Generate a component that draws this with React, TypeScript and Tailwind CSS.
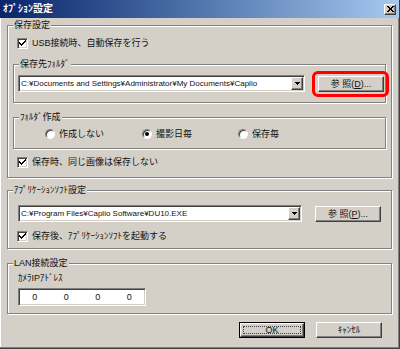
import React from "react";

const sunken =
  "border border-t-[#808080] border-l-[#808080] border-b-white border-r-white shadow-[inset_1px_1px_0_#404040,inset_-1px_-1px_0_#d4d0c8]";
const raised =
  "border border-t-white border-l-white border-b-[#404040] border-r-[#404040] shadow-[inset_-1px_-1px_0_#808080]";

function Group({
  label,
  className,
  children,
}: {
  label: string;
  className: string;
  children?: React.ReactNode;
}) {
  return (
    <div
      className={
        "relative border border-[#808080] shadow-[1px_1px_0_#fff,inset_1px_1px_0_#fff] " +
        className
      }
    >
      <span className="absolute left-[5px] top-[-7px] px-[1px] bg-[#d4d0c8] leading-[12px] whitespace-nowrap">
        {label}
      </span>
      {children}
    </div>
  );
}

function Check() {
  return (
    <span
      className={
        "w-[11px] h-[11px] bg-white flex items-center justify-center shrink-0 " +
        sunken
      }
    >
      <svg width="7" height="7" viewBox="0 0 7 7" shapeRendering="crispEdges">
        <path
          d="M6 0h1v2h-1v1h-1v1h-1v1h-1v1h-1v-1h-1v-1h-1v-2h1v1h1v1h1v-1h1v-1h1z"
          fill="#000"
        />
      </svg>
    </span>
  );
}

function CheckRow({ label, className }: { label: string; className: string }) {
  return (
    <div className={"flex items-center h-[12px] gap-[4px] " + className}>
      <Check />
      <span className="leading-[12px] whitespace-nowrap">{label}</span>
    </div>
  );
}

function Radio({ on, label }: { on?: boolean; label: string }) {
  return (
    <div className="flex items-center gap-[4px] h-[12px]">
      <span className="w-[10px] h-[10px] rounded-full bg-white border border-t-[#808080] border-l-[#808080] border-b-white border-r-white shadow-[inset_1px_1px_0_#404040] flex items-center justify-center shrink-0">
        {on && <span className="w-[4px] h-[4px] rounded-full bg-black" />}
      </span>
      <span className="leading-[12px] whitespace-nowrap">{label}</span>
    </div>
  );
}

function Combo({ text }: { text: string }) {
  return (
    <div className={"w-[287px] h-[17px] bg-white flex items-center " + sunken}>
      <span className="flex-1 pl-[2px] text-[8px] leading-[12px] whitespace-nowrap overflow-hidden">
        {text}
      </span>
      <span
        className={
          "w-[12px] h-[13px] mr-[1px] bg-[#d4d0c8] flex items-center justify-center shrink-0 " +
          raised
        }
      >
        <svg width="5" height="3" viewBox="0 0 5 3" shapeRendering="crispEdges">
          <path d="M0 0h5v1h-1v1h-1v1h-1v-1h-1v-1h-1z" fill="#000" />
        </svg>
      </span>
    </div>
  );
}

function Button({
  children,
  isDefault,
}: {
  children: React.ReactNode;
  isDefault?: boolean;
}) {
  if (isDefault) {
    return (
      <div className="w-[66px] h-[16px] border border-black flex">
        <div
          className={
            "flex-1 bg-[#d4d0c8] flex items-center justify-center p-[2px] " +
            raised
          }
        >
          <div className="w-full h-full border border-dotted border-[#404040] flex items-center justify-center leading-[10px]">
            {children}
          </div>
        </div>
      </div>
    );
  }
  return (
    <div
      className={
        "w-[66px] h-[16px] bg-[#d4d0c8] flex items-center justify-center leading-[12px] " +
        raised
      }
    >
      {children}
    </div>
  );
}

export default function App() {
  return (
    <div className="w-[400px] h-[349px] bg-[#d4d0c8] flex flex-col overflow-hidden text-[#111] text-[9px] font-['Liberation_Sans','Noto_Sans_CJK_JP',sans-serif] border-r border-b border-r-[#404040] border-b-[#404040] shadow-[inset_-1px_-1px_0_#808080,inset_1px_0_0_#fff]">
      {/* Title bar */}
      <div className="h-[18px] shrink-0 flex items-center justify-between bg-gradient-to-r from-[#0a246a] to-[#a6caf0] pl-[3px] pr-[3px]">
        <span className="text-white font-bold text-[10px] leading-[12px] whitespace-nowrap">
          ｵﾌﾟｼｮﾝ設定
        </span>
        <span
          className={
            "w-[12px] h-[11px] bg-[#d4d0c8] flex items-center justify-center " +
            raised
          }
        >
          <svg width="7" height="6" viewBox="0 0 7 6" shapeRendering="crispEdges">
            <path
              d="M0 0h2v1h1v1h1v-1h1v-1h2v1h-1v1h-1v2h1v1h1v1h-2v-1h-1v-1h-1v1h-1v1h-2v-1h1v-1h1v-2h-1v-1h-1z"
              fill="#000"
            />
          </svg>
        </span>
      </div>

      <div className="flex flex-col px-[7px]">
        {/* 保存設定 */}
        <Group label="保存設定" className="mt-[7px] h-[153px] flex flex-col px-[5px]">
          <CheckRow label="USB接続時、自動保存を行う" className="mt-[11px] ml-[4px]" />

          <Group label="保存先ﾌｫﾙﾀﾞ" className="mt-[15px] h-[39px] flex items-start pl-[4px]">
            <div className="mt-[10px] flex items-center">
              <Combo text="C:¥Documents and Settings¥Administrator¥My Documents¥Caplio" />
              <div className="relative ml-[13px]">
                <Button>
                  参 照(<span className="underline">D</span>)...
                </Button>
                <div className="absolute -left-[6px] -right-[5px] -top-[5px] -bottom-[5px] border-[3px] border-[#ff0000] rounded-[6px]" />
              </div>
            </div>
          </Group>

          <Group label="ﾌｫﾙﾀﾞ作成" className="mt-[14px] h-[32px] flex items-start pl-[31px]">
            <div className="mt-[10px] grid grid-cols-[97px_96px_80px]">
              <Radio label="作成しない" />
              <Radio on label="撮影日毎" />
              <Radio label="保存毎" />
            </div>
          </Group>

          <CheckRow label="保存時、同じ画像は保存しない" className="mt-[7px] ml-[4px]" />
        </Group>

        {/* ｱﾌﾟﾘｹｰｼｮﾝｿﾌﾄ設定 */}
        <Group label="ｱﾌﾟﾘｹｰｼｮﾝｿﾌﾄ設定" className="mt-[12px] h-[59px] flex flex-col px-[10px]">
          <div className="mt-[14px] flex items-center">
            <Combo text="C:¥Program Files¥Caplio Software¥DU10.EXE" />
            <div className="ml-[13px]">
              <Button>
                参 照(<span className="underline">P</span>)...
              </Button>
            </div>
          </div>
          <CheckRow label="保存後、ｱﾌﾟﾘｹｰｼｮﾝｿﾌﾄを起動する" className="mt-[8px] -ml-[1px]" />
        </Group>

        {/* LAN接続設定 */}
        <Group label="LAN接続設定" className="mt-[14px] h-[51px] flex flex-col px-[10px]">
          <span className="mt-[8px] leading-[12px] whitespace-nowrap">ｶﾒﾗIPｱﾄﾞﾚｽ</span>
          <div className={"mt-[4px] w-[128px] h-[18px] bg-white grid grid-cols-4 items-center " + sunken}>
            <span className="text-center leading-[12px]">0</span>
            <span className="text-center leading-[12px]">0</span>
            <span className="text-center leading-[12px]">0</span>
            <span className="text-center leading-[12px]">0</span>
          </div>
        </Group>

        {/* Buttons */}
        <div className="mt-[8px] flex justify-end gap-[11px] pr-[10px]">
          <Button isDefault>OK</Button>
          <Button>ｷｬﾝｾﾙ</Button>
        </div>
      </div>
    </div>
  );
}
